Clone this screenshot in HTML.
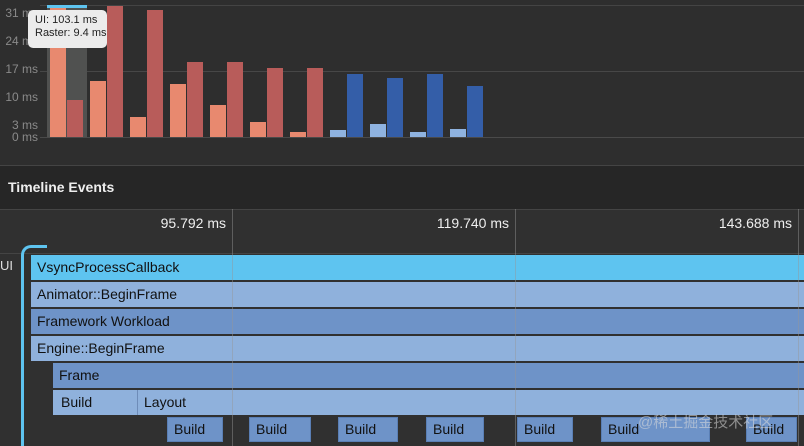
<!DOCTYPE html>
<html style="width:804px;height:446px;overflow:hidden"><head><meta charset="utf-8"><style>
*{margin:0;padding:0;box-sizing:border-box}
body{width:804px;height:446px;overflow:hidden;background:#303030;font-family:"Liberation Sans","Noto Sans CJK SC",sans-serif;position:relative}
.a{position:absolute}
.lbl{position:absolute;right:766px;color:#8a8a8a;font-size:12px;white-space:nowrap;line-height:12px}
.row{position:absolute;height:25px;color:#111;font-size:14px;line-height:25px;padding-left:6px;white-space:nowrap;overflow:hidden}
.L{background:#8fb1dc}.M{background:#6e93c8}.C{background:#5ec4f0}
.b{position:absolute;top:417px;height:25px;background:#6e93c8;border:1px solid #5a7fb5;color:#111;font-size:14px;line-height:23px;padding-left:6px}
.v{position:absolute;top:209px;width:1px;height:237px;background:rgba(150,150,150,.45)}
</style></head><body>
<div class="a" style="left:0;top:0;width:804px;height:166px;background:#2e2e2e"></div>
<div class="a" style="left:40px;top:5px;width:764px;height:1px;background:#444"></div>
<div class="a" style="left:40px;top:71px;width:764px;height:1px;background:#474747"></div>
<div class="a" style="left:47px;top:5px;width:40px;height:133px;background:#505150"></div>
<div class="a" style="left:47px;top:5px;width:40px;height:3px;background:#5ec4f0"></div>
<div class="lbl" style="top:7px">31 ms</div>
<div class="lbl" style="top:35px">24 ms</div>
<div class="lbl" style="top:63px">17 ms</div>
<div class="lbl" style="top:91px">10 ms</div>
<div class="lbl" style="top:119px">3 ms</div>
<div class="lbl" style="top:131px">0 ms</div>
<div id="bars"></div>
<div class="a" style="left:40px;top:137px;width:764px;height:1px;background:#4a4a4a"></div>
<div class="a" style="left:28px;top:10px;width:79px;height:38px;background:#ececec;border-radius:5px;font-size:11px;color:#222;padding:4px 0 0 7px;line-height:13px">UI: 103.1 ms<br>Raster: 9.4 ms</div>
<div class="a" style="left:0;top:165px;width:804px;height:1px;background:#444"></div>
<div class="a" style="left:0;top:166px;width:804px;height:43px;background:#262626;color:#eee;font-weight:bold;font-size:14px;line-height:43px;padding-left:8px">Timeline Events</div>
<div class="a" style="left:0;top:209px;width:804px;height:1px;background:#444"></div>
<div class="a" style="left:0;top:253px;width:804px;height:1px;background:#444"></div>
<div class="a" style="right:578px;top:215px;color:#eee;font-size:14px">95.792 ms</div>
<div class="a" style="right:295px;top:215px;color:#eee;font-size:14px">119.740 ms</div>
<div class="a" style="right:12px;top:215px;color:#eee;font-size:14px">143.688 ms</div>
<div class="a" style="left:0;top:258px;color:#ddd;font-size:13px">UI</div>
<div class="a" style="left:21px;top:245px;width:26px;height:201px;border:3px solid #5ec4f0;border-right:none;border-bottom:none;border-radius:10px 0 0 0"></div>
<div class="row C" style="left:31px;top:255px;width:773px">VsyncProcessCallback</div>
<div class="row L" style="left:31px;top:282px;width:773px">Animator::BeginFrame</div>
<div class="row M" style="left:31px;top:309px;width:773px">Framework Workload</div>
<div class="row L" style="left:31px;top:336px;width:773px">Engine::BeginFrame</div>
<div class="row M" style="left:53px;top:363px;width:751px">Frame</div>
<div class="row L" style="left:53px;top:390px;width:751px;padding-left:8px">Build</div>
<div class="a" style="left:137px;top:390px;width:1px;height:25px;background:#6e8cb8"></div>
<div class="row L" style="left:138px;top:390px;width:666px;background:transparent">Layout</div>
<div class="b" style="left:167px;width:56px">Build</div>
<div class="b" style="left:249px;width:62px">Build</div>
<div class="b" style="left:338px;width:60px">Build</div>
<div class="b" style="left:426px;width:58px">Build</div>
<div class="b" style="left:517px;width:56px">Build</div>
<div class="b" style="left:601px;width:109px">Build</div>
<div class="b" style="left:746px;width:51px">Build</div>
<div class="v" style="left:232px"></div>
<div class="v" style="left:515px"></div>
<div class="v" style="left:798px"></div>
<div class="a" style="left:638px;top:411px;color:rgba(220,220,220,.55);font-size:15px">@稀土掘金技术社区</div>
<script>
var u=[8,81,117,84,105,122,132,130,124,132,129],r=[100,6,10,62,62,68,68,74,78,74,86],h='';
for(var i=0;i<11;i++){var x=50+40*i,blue=i>=7;
h+='<div class="a" style="left:'+x+'px;top:'+u[i]+'px;width:16px;height:'+(138-u[i])+'px;background:'+(blue?'#8fb3e0':'#e8896f')+'"></div>';
h+='<div class="a" style="left:'+(x+17)+'px;top:'+r[i]+'px;width:16px;height:'+(138-r[i])+'px;background:'+(blue?'#345ea8':'#b85c5a')+'"></div>';}
document.getElementById('bars').innerHTML=h;
</script>
</body></html>
